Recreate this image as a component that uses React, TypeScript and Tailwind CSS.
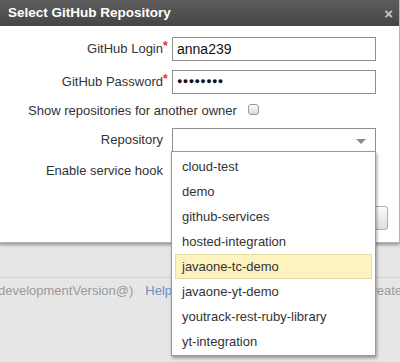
import React from 'react';

const repos = [
  'cloud-test',
  'demo',
  'github-services',
  'hosted-integration',
  'javaone-tc-demo',
  'javaone-yt-demo',
  'youtrack-rest-ruby-library',
  'yt-integration',
];

function Label({ text, required }: { text: string; required?: boolean }) {
  return (
    <div className="w-[171px] shrink-0 pr-[9px] text-right">
      <span className="relative">
        {text}
        {required && (
          <span className="absolute left-full top-[-4px] text-[12px] font-bold text-[#e0322a]">*</span>
        )}
      </span>
    </div>
  );
}

export default function App() {
  const selected = 'javaone-tc-demo';

  return (
    <div
      className="relative h-[362px] w-[400px] overflow-hidden bg-[#e6e6e6] text-[13px] text-[#333]"
      style={{ fontFamily: '"Liberation Sans", Arial, sans-serif' }}
    >
      {/* Page behind the dialog */}
      <div className="h-[277px]" />
      <div className="flex h-[24px] items-center border-t border-[#d3d3d3] pt-[2px] text-[#9a9a9a]">
        <span className="ml-[-2px]">developmentVersion@)</span>
        <span className="mx-[6px] h-[17px] w-px bg-[#cfcfcf]" />
        <span className="text-[#6b8fc6]">Help</span>
        <span className="ml-[191px]">Created</span>
      </div>

      {/* Dialog */}
      <div className="absolute left-[-1px] top-0 h-[243px] w-[401px] border border-t-0 border-[#b5b5b5] bg-white shadow-[0_2px_3px_rgba(0,0,0,0.35)]">
        <div className="flex h-[26px] items-center justify-between bg-gradient-to-b from-[#5e5e5e] to-[#454545] pl-[8px] pr-[6px]">
          <span className="text-[13.5px] font-bold text-white">Select GitHub Repository</span>
          <span className="text-[15px] font-bold leading-none text-[#c8c8c8]">×</span>
        </div>

        <div className="flex flex-col pl-px">
          <div className="mt-[11px] flex h-[24px] items-center">
            <Label text="GitHub Login" required />
            <div className="flex h-[24px] w-[204px] items-center border border-[#8f8f8f] px-[4px] text-[14px] text-[#111]">
              anna239
            </div>
          </div>

          <div className="mt-[9px] flex h-[24px] items-center">
            <Label text="GitHub Password" required />
            <div className="flex h-[24px] w-[204px] items-center border border-[#8f8f8f] px-[4px] text-[9px] tracking-[0.4px] text-[#111]">
              ●●●●●●●●
            </div>
          </div>

          <div className="flex h-[34px] items-center pl-[27px]">
            <span>Show repositories for another owner</span>
            <span className="ml-[11px] mt-[-3px] h-[11px] w-[11px] rounded-[3px] border border-[#9a9a9a] bg-gradient-to-b from-[#fafafa] to-[#dcdcdc]" />
          </div>

          <div className="flex h-[24px] items-center">
            <Label text="Repository" />
            <div className="relative h-[24px] w-[204px] border border-[#8f8f8f]">
              <span className="absolute right-[9px] top-[10px] h-0 w-0 border-x-[5px] border-t-[5px] border-x-transparent border-t-[#8c8c8c]" />
            </div>
          </div>

          <div className="flex h-[37px] items-center">
            <Label text="Enable service hook" />
          </div>

          <div className="mt-[17px] flex justify-end pr-[11px]">
            <div className="h-[24px] w-[80px] rounded-[3px] border border-[#b0b0b0] bg-gradient-to-b from-[#fbfbfb] to-[#dedede]" />
          </div>
        </div>
      </div>

      {/* Repository dropdown */}
      <div className="absolute left-[171px] top-[151px] w-[205px] border border-[#9a9a9a] bg-white pt-[2px] pb-[1px] shadow-[1px_2px_3px_rgba(0,0,0,0.35)]">
        {repos.map((r) => (
          <div
            key={r}
            className={
              r === selected
                ? 'mx-[3px] flex h-[25px] items-center border border-[#e6dca6] bg-[#fcf3bf] pl-[6px]'
                : 'mx-[3px] flex h-[25px] items-center border border-transparent pl-[6px]'
            }
          >
            {r}
          </div>
        ))}
      </div>
    </div>
  );
}
